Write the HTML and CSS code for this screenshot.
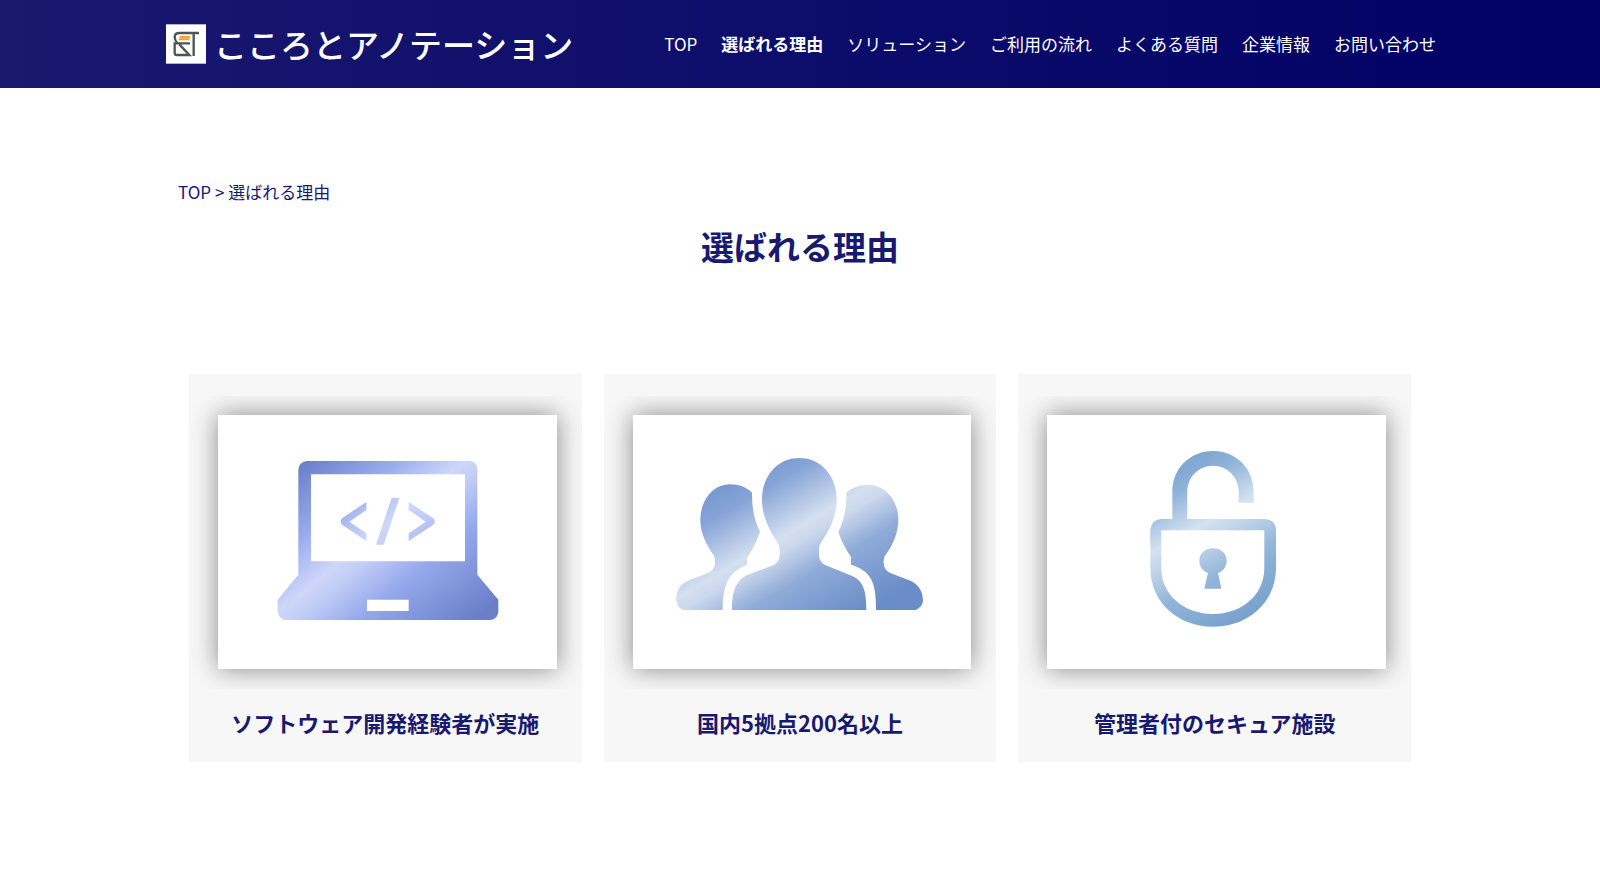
FILE: index.html
```html
<!DOCTYPE html>
<html lang="ja">
<head>
<meta charset="utf-8">
<meta name="viewport" content="width=device-width, initial-scale=1">
<title>選ばれる理由 | こころとアノテーション</title>
<link rel="stylesheet" href="styles.css">
</head>
<body>
<header class="site-header">
  <div class="header-inner">
    <a class="brand" href="#">
      <svg class="brand-mark" viewBox="20 19 120 118" aria-hidden="true">
        <rect x="20" y="19" width="120" height="118" fill="#fff"/>
        <path d="M119 45H60Q46 45 46 57Q46 66 54 76M92 76H46V104Q46 111 53 111H90L60 79M103 45V114" fill="none" stroke="#505357" stroke-width="7"/>
        <path d="M62 54H93L89 67H57Z" fill="#f9a01b"/>
        <path d="M61 61H86" stroke="#fbd08c" stroke-width="2"/>
      </svg>
      <span class="brand-name">こころとアノテーション</span>
    </a>
    <nav class="site-nav">
      <a href="#">TOP</a>
      <a href="#" class="current" aria-current="page">選ばれる理由</a>
      <a href="#">ソリューション</a>
      <a href="#">ご利用の流れ</a>
      <a href="#">よくある質問</a>
      <a href="#">企業情報</a>
      <a href="#">お問い合わせ</a>
    </nav>
  </div>
</header>
<main class="page">
  <nav class="breadcrumb" aria-label="パンくず"><a href="#">TOP</a> &gt; <a href="#">選ばれる理由</a></nav>
  <h1 class="page-title">選ばれる理由</h1>
  <div class="cards">
    <section class="card">
      <div class="card-visual">
        <svg class="card-art" viewBox="114 151 1016 762" aria-hidden="true">
          <defs>
            <linearGradient id="laptop" gradientUnits="userSpaceOnUse" x1="410" y1="270" x2="840" y2="800">
              <stop offset="0" stop-color="#6c81cb"/>
              <stop offset=".24" stop-color="#98abee"/>
              <stop offset=".43" stop-color="#ced7f9"/>
              <stop offset=".5" stop-color="#c3cef6"/>
              <stop offset=".68" stop-color="#95a8ec"/>
              <stop offset="1" stop-color="#6a7fc8"/>
            </linearGradient>
          </defs>
          <g fill="url(#laptop)">
            <path fill-rule="evenodd" d="M382 289H866Q892 289 892 315V630L955 705V741Q953 763 931 766H318Q296 763 293 741V705L355 630V315Q357 291 382 289ZM393 329V590H855V329ZM561 705V739H686V705Z"/>
            <path d="M559 412V436L508 471L559 506V529L486 480Q478 471 486 461Z"/>
            <path d="M635 400H658L611 540H588Z"/>
            <path d="M686 412V436L737 471L686 506V529L760 480Q768 471 760 461Z"/>
          </g>
        </svg>
      </div>
      <h2 class="card-title">ソフトウェア開発経験者が実施</h2>
    </section>
    <section class="card">
      <div class="card-visual">
        <svg class="card-art" viewBox="114 151 1016 762" aria-hidden="true">
          <defs>
            <linearGradient id="people" gradientUnits="userSpaceOnUse" x1="440" y1="310" x2="720" y2="790">
              <stop offset="0" stop-color="#7496cf"/>
              <stop offset=".16" stop-color="#86a4d6"/>
              <stop offset=".43" stop-color="#d5e0f1"/>
              <stop offset=".5" stop-color="#cbd8ed"/>
              <stop offset=".68" stop-color="#8fabd8"/>
              <stop offset="1" stop-color="#6a8dc7"/>
            </linearGradient>
          </defs>
          <g fill="url(#people)">
            <path d="M613 280C682 280 725 338 725 405C725 455 702 500 679 532Q672 541 672 552V572Q673 593 692 602L770 633C804 648 814 675 814 736H411C411 675 424 648 456 631L534 602Q553 593 554 572V552Q554 541 546 532C523 495 501 455 501 405C501 338 544 280 613 280Z"/>
            <path d="M471 384C453 367 432 359 406 359C351 359 316 411 316 467C316 506 334 540 355 570Q360 576 360 584V592Q360 617 338 625L278 649C254 660 244 680 244 706Q245 729 264 736H383C383 705 386 680 393 660C405 625 431 610 456 600V581C470 558 485 532 495 502C477 465 471 430 471 384Z"/>
            <path d="M754 384C772 368 793 361 819 360C874 360 910 411 910 464C910 506 893 543 871 572Q866 578 866 586V594Q867 617 886 625L948 649C974 661 984 684 984 710Q981 728 962 736H843C843 690 839 665 829 645C816 620 794 608 768 600V577C753 554 739 530 730 501C749 465 754 430 754 384Z"/>
          </g>
        </svg>
      </div>
      <h2 class="card-title">国内5拠点200名以上</h2>
    </section>
    <section class="card">
      <div class="card-visual">
        <svg class="card-art" viewBox="114 151 1016 762" aria-hidden="true">
          <defs>
            <linearGradient id="lock" gradientUnits="userSpaceOnUse" x1="490" y1="300" x2="740" y2="750">
              <stop offset="0" stop-color="#7ca4cf"/>
              <stop offset=".16" stop-color="#8fb3d9"/>
              <stop offset=".39" stop-color="#d5e2f0"/>
              <stop offset=".48" stop-color="#c5d6ea"/>
              <stop offset=".7" stop-color="#91b4d9"/>
              <stop offset="1" stop-color="#75a1cd"/>
            </linearGradient>
          </defs>
          <g fill="url(#lock)">
            <path fill-rule="evenodd" d="M490 463V381C490 313 542 259 612 259C682 259 734 313 734 381V414H689V381C689 338 656 303 612 303C568 303 535 338 535 381V463H768Q800 465 801 496V610C801 712 718 786 612 786C506 786 424 712 424 610V496Q426 465 456 463ZM457 497V610C457 693 528 748 612 748C696 748 766 693 766 610V497Z"/>
            <path d="M612 551A38 38 0 0 1 627 625L637 672H586L597 625A38 38 0 0 1 612 551Z"/>
          </g>
        </svg>
      </div>
      <h2 class="card-title">管理者付のセキュア施設</h2>
    </section>
  </div>
</main>
</body>
</html>
```

FILE: styles.css
```css
* {
  box-sizing: border-box;
}

body {
  margin: 0;
  background: #fff;
  color: #191970;
  font-family: "Noto Sans CJK JP", sans-serif;
  font-size: 17px;
  line-height: 24px;
}

a {
  color: inherit;
  text-decoration: none;
}

.site-header {
  background: linear-gradient(to right, #191970, #000066);
  color: #fff;
}

.header-inner {
  display: flex;
  align-items: center;
  justify-content: space-between;
  gap: 24px;
  max-width: 1272px;
  min-height: 88px;
  margin: 0 auto;
  padding-left: 2px;
}

.brand {
  display: flex;
  align-items: center;
  gap: 8px;
}

.brand-mark {
  width: 40px;
  height: 40px;
}

.brand-name {
  font-size: 33px;
  font-weight: 500;
  line-height: 48px;
  white-space: nowrap;
}

.site-nav {
  display: flex;
  flex-wrap: wrap;
  gap: 8px 24px;
}

.site-nav .current {
  font-weight: 700;
}

.page {
  max-width: 1244px;
  margin: 0 auto;
  padding: 92px 0 64px;
}

.page-title {
  margin: 18px 0 0;
  font-size: 33px;
  font-weight: 600;
  line-height: 48px;
  text-align: center;
}

.cards {
  display: grid;
  grid-template-columns: repeat(auto-fit, minmax(300px, 1fr));
  gap: 22px;
  padding: 0 11px;
  margin-top: 104px;
}

.card {
  padding: 22px 0 24px;
  background: #f7f7f7;
  text-align: center;
}

.card-visual {
  overflow: hidden;
  padding: 19px 25px 20px 29px;
}

.card-art {
  display: block;
  width: 100%;
  background: #fff;
  box-shadow: 0 0 24px rgba(0, 0, 0, 0.45);
}

.card-title {
  margin: 17px 0 0;
  font-size: 22px;
  font-weight: 600;
  line-height: 32px;
}
```
